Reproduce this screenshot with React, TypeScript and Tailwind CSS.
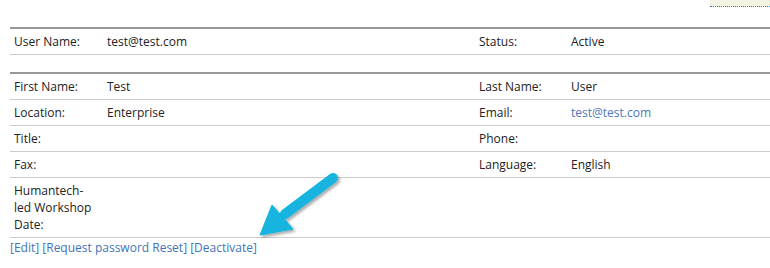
const labelCls = 'px-[4px] py-[4px] align-top';
const cellCls = 'px-[4px] py-[4px] align-top';

type Row = { l1: React.ReactNode; key: string; v1?: string; l2?: string; v2?: string; link2?: boolean };

const detailRows: Row[] = [
    { key: 'first', l1: 'First Name:', v1: 'Test', l2: 'Last Name:', v2: 'User' },
    { key: 'loc', l1: 'Location:', v1: 'Enterprise', l2: 'Email:', v2: 'test@test.com', link2: true },
    { key: 'title', l1: 'Title:', l2: 'Phone:' },
    { key: 'fax', l1: 'Fax:', l2: 'Language:', v2: 'English' },
    { key: 'hw', l1: <>Humantech-<br />led Workshop<br />Date:</> },
];

function Cols() {
    return (
        <colgroup>
            <col className="w-[93px]" />
            <col className="w-[372px]" />
            <col className="w-[92px]" />
            <col />
        </colgroup>
    );
}

export default function App() {
    return (
        <div className="relative w-[770px] h-[268px] bg-white overflow-hidden text-[12px] leading-[17px] text-[#222]"
            style={{ fontFamily: '"Open Sans", "Noto Sans", sans-serif' }}>
            <div className="flex justify-end">
                <div className="w-[60px] h-[7px] bg-[#f3f3e3] border-b border-dotted border-[#2f6fd0]"></div>
            </div>

            <div className="pl-[10px] mt-[20px]">
                <table className="w-full table-fixed border-collapse border-t-2 border-[#999]">
                    <Cols />
                    <tbody>
                        <tr className="border-b border-[#ccc]">
                            <td className={labelCls}>User Name:</td>
                            <td className={cellCls}>test@test.com</td>
                            <td className={labelCls}>Status:</td>
                            <td className={cellCls}>Active</td>
                        </tr>
                    </tbody>
                </table>

                <table className="w-full table-fixed border-collapse border-t-2 border-[#999] mt-[17px]">
                    <Cols />
                    <tbody>
                        {detailRows.map((r) => (
                            <tr key={r.key} className="border-b border-[#ccc]">
                                <td className={labelCls}>{r.l1}</td>
                                <td className={cellCls}>{r.v1}</td>
                                <td className={labelCls}>{r.l2}</td>
                                <td className={cellCls}>
                                    {r.link2 ? <span className="text-[#4a78b8]">{r.v2}</span> : r.v2}
                                </td>
                            </tr>
                        ))}
                    </tbody>
                </table>

                <div className="leading-[19px] text-[#3f74b8]">
                    <a>[Edit]</a> <a>[Request password Reset]</a> <a>[Deactivate]</a>
                </div>
            </div>

            {/* callout arrow */}
            <svg className="absolute left-[250px] top-[165px]" width="100" height="80" viewBox="250 165 100 80">
                <defs>
                    <filter id="sh" x="-20%" y="-20%" width="140%" height="140%">
                        <feDropShadow dx="2" dy="2" stdDeviation="1.5" floodColor="#000" floodOpacity="0.35" />
                    </filter>
                </defs>
                <g filter="url(#sh)" fill="#12b4de" stroke="#12b4de">
                    <line x1="333" y1="178" x2="285" y2="214" strokeWidth="10" strokeLinecap="round" />
                    <polygon points="260,235 272,205 293,229" strokeWidth="1" strokeLinejoin="round" />
                </g>
            </svg>
        </div>
    );
}
